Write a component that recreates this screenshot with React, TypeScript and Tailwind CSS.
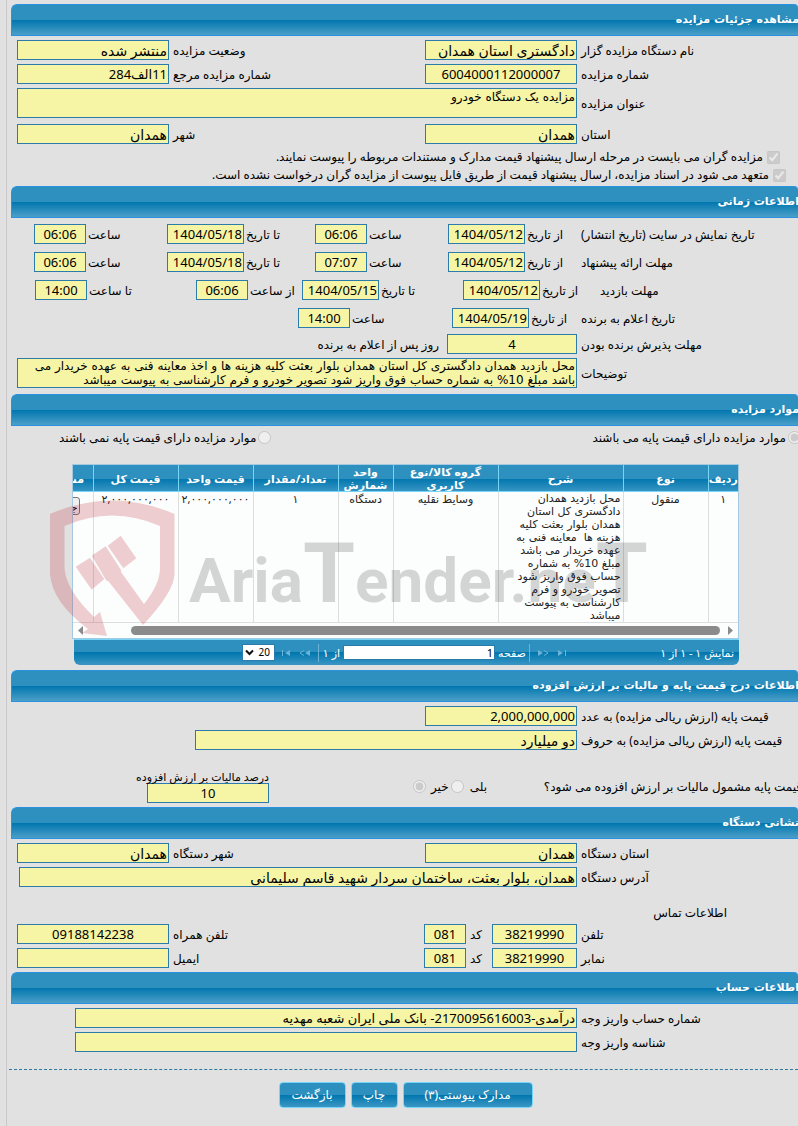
import { useId } from "react";
import type { ReactNode } from "react";

const boxClass =
  "block shrink-0 rounded-none border border-[#2b7bab] bg-[#f6f4a5] p-0 px-px leading-[16px] text-black outline-none";

type FieldProps = {
  label: string;
  value: string;
  slot: string;
  width: string;
  align?: string;
  ltr?: boolean;
};

function Field({ label, value, slot, width, align = "text-right", ltr = false }: FieldProps) {
  const id = useId();
  const size = /\d/.test(value) ? "text-[13px]" : "text-sm";
  return (
    <>
      <label htmlFor={id} className={`${slot} whitespace-nowrap pt-[2px] text-left`}>
        {label}
      </label>
      <input
        id={id}
        readOnly
        dir={ltr ? "ltr" : "rtl"}
        defaultValue={value}
        className={`${boxClass} h-5 ${size} ${width} ${align}`}
      />
    </>
  );
}

function Area({ label, value, leading }: { label: string; value: string; leading: string }) {
  const id = useId();
  return (
    <Row>
      <label htmlFor={id} className="w-[217px] shrink-0 pt-[2px] text-left">
        {label}
      </label>
      <textarea
        id={id}
        readOnly
        defaultValue={value}
        className={`block h-[30px] min-w-0 flex-1 resize-none overflow-hidden rounded-none border border-[#2b7bab] bg-[#f6f4a5] p-0 px-px font-['DejaVu_Sans',sans-serif] text-xs text-black outline-none ${leading}`}
      />
    </Row>
  );
}

function Row({ children, className = "pl-[17px]" }: { children: ReactNode; className?: string }) {
  return <div className={`flex items-center gap-1 ${className}`}>{children}</div>;
}

function TimeRow({ children }: { children: ReactNode }) {
  return <div className="flex items-center gap-[2px]">{children}</div>;
}

function SectionTitle({ children }: { children: ReactNode }) {
  return (
    <h2 className="ml-[11px] flex h-8 items-center overflow-hidden rounded-tl-md rounded-tr-sm border border-r-0 border-[#2a92e0] bg-[linear-gradient(#2e90be_0%,#2e90be_50%,#0076ae_50%,#4b9fc8_100%)] font-['DejaVu_Sans',sans-serif] text-[11px] font-bold text-white">
      <span className="-mr-px whitespace-nowrap">{children}</span>
    </h2>
  );
}

const columns = [
  { title: "ردیف", width: "w-[30px]" },
  { title: "نوع", width: "w-[85px]" },
  { title: "شرح", width: "w-[125px]" },
  { title: "گروه کالا/نوع کاربری", width: "w-[105px]" },
  { title: "واحد شمارش", width: "w-[55px]" },
  { title: "تعداد/مقدار", width: "w-[85px]" },
  { title: "قیمت واحد", width: "w-[75px]" },
  { title: "قیمت کل", width: "w-[85px]" },
  { title: "مشخصات", width: "w-[70px]" },
];

const descriptionLines = [
  "محل بازدید همدان",
  "دادگستری کل استان",
  "همدان بلوار بعثت کلیه",
  "هزینه ها  معاینه فنی به",
  "عهده خریدار می باشد",
  "مبلغ 10% به شماره",
  "حساب فوق واریز شود",
  "تصویر خودرو و فرم",
  "کارشناسی به پیوست",
  "میباشد",
];

function Watermark() {
  return (
    <svg
      className="pointer-events-none absolute -left-[22px] top-9 h-[140px] w-[604px]"
      viewBox="50 500 604 140"
      aria-hidden="true"
      direction="ltr"
    >
      <g fill="#be1e2d" fillOpacity="0.21">
        <path d="M50 514 Q112 487 174.500 514 V574 Q174 592 143 625 L109 582 L121 572 L144 604 Q160 584 160 568 V526 Q112 505 64.500 526 V568 Q66 590 94 617 L100 612 L107 636 L82 633 L88 629 Q52 602 50 574 Z" />
        <path d="M120.700 535.700 L136.300 558.300 L123.300 568.300 L107.700 545.700 Z" />
        <path d="M105.700 546.300 L121 570 L121 572 L109 582 L106 580 L91.700 555.700 Z" />
        <path d="M90 557.700 L104.300 579 L91.700 589.700 L75.700 566.700 Z" />
      </g>
      <text
        x="189"
        y="602"
        fill="#000000"
        fillOpacity="0.16"
        fontWeight="700"
        fontFamily="Roboto, sans-serif"
        fontSize="62"
      >
        <tspan fontSize="62">Aria</tspan>
        <tspan fontSize="84">T</tspan>
        <tspan fontSize="62">ender.ne</tspan>
        <tspan fontSize="84">T</tspan>
      </text>
    </svg>
  );
}

function PageArrow({ dir, kind, label }: { dir: "left" | "right"; kind: "end" | "step"; label: string }) {
  return (
    <button type="button" disabled aria-label={label} className="block">
      <svg width="12" height="8" viewBox="0 0 12 8" className={dir === "right" ? "" : "rotate-180"}>
        <path d="M1 1 V7 L6 4 Z" fill="#6cb3d6" />
        {kind === "end" ? (
          <path d="M8.500 1 V7" stroke="#6cb3d6" strokeWidth="1" />
        ) : (
          <path d="M7 1.500 L11 4 L7 6.500" stroke="#6cb3d6" fill="none" />
        )}
      </svg>
    </button>
  );
}

function ItemsTable() {
  const cell = "border-l border-[#dddddd] px-[2px] align-top";
  return (
    <div className="relative ml-[72px] mr-[59px] mt-[18px] text-[11px]">
      <div className="overflow-hidden border border-[#a6c9e2] bg-[#fcfdfd]">
        <table className="w-[715px] table-fixed border-collapse leading-[13px] text-[#222222]">
          <thead>
            <tr className="h-[26px] bg-[linear-gradient(#2e90be_0%,#2e90be_50%,#0076ae_50%,#3b97c4_100%)] text-white">
              {columns.map((c) => (
                <th
                  key={c.title}
                  className={`${c.width} overflow-hidden border-b border-l border-[#77d5f7] p-0 text-center font-bold`}
                >
                  {c.title}
                </th>
              ))}
            </tr>
          </thead>
          <tbody>
            <tr className="border-b border-[#dddddd] text-center">
              <td className={cell}>۱</td>
              <td className={cell}>منقول</td>
              <td className={`${cell} whitespace-pre text-right font-['DejaVu_Sans',sans-serif]`}>
                {descriptionLines.map((line) => (
                  <div key={line}>{line}</div>
                ))}
              </td>
              <td className={cell}>وسایط نقلیه</td>
              <td className={cell}>دستگاه</td>
              <td className={cell}>۱</td>
              <td className={`${cell} whitespace-nowrap`}>۲,۰۰۰,۰۰۰,۰۰۰</td>
              <td className={`${cell} whitespace-nowrap`}>۲,۰۰۰,۰۰۰,۰۰۰</td>
              <td className="pr-[13px] pt-[5px] text-right align-top">
                <button
                  type="button"
                  className="h-[18px] rounded-[3px] border border-[#767676] bg-[#efefef] px-px text-black"
                >
                  جزئیات
                </button>
              </td>
            </tr>
          </tbody>
        </table>
        <div className="flex h-[15px] items-center justify-between px-[5px]">
          <svg width="5" height="9" viewBox="0 0 5 9">
            <path d="M0 0 V9 L5 4.500 Z" fill="#8b8b8b" />
          </svg>
          <div className="mr-2 ml-12 h-[9px] flex-1 rounded-full bg-[#8b8b8b]" />
          <svg width="5" height="9" viewBox="0 0 5 9">
            <path d="M5 0 V9 L0 4.500 Z" fill="#8b8b8b" />
          </svg>
        </div>
      </div>
      <div className="ml-[2px] flex h-[26px] items-center rounded-b-md border-t border-[#77d5f7] bg-[linear-gradient(#2e90be_0%,#2e90be_50%,#0076ae_50%,#3b97c4_100%)] pr-[5px] text-white">
        <span className="w-[165px] shrink-0 whitespace-nowrap">نمایش ۱ - ۱ از ۱</span>
        <div className="flex items-center gap-2">
          <PageArrow dir="right" kind="end" label="صفحه اول" />
          <PageArrow dir="right" kind="step" label="صفحه قبل" />
        </div>
        <span className="mr-[7px] h-[18px] w-px bg-[#6cb3d6]" />
        <label htmlFor="page-no" className="w-[34px] text-center">
          صفحه
        </label>
        <input
          id="page-no"
          dir="ltr"
          defaultValue="1"
          className="h-[15px] w-[152px] rounded-none border border-[#2b7bab] bg-white px-px text-right text-[11px] text-black outline-none"
        />
        <span className="w-6 whitespace-nowrap pr-[3px]">از ۱</span>
        <span className="h-[18px] w-px bg-[#6cb3d6]" />
        <div className="mr-[7px] flex items-center gap-2">
          <PageArrow dir="left" kind="step" label="صفحه بعد" />
          <PageArrow dir="left" kind="end" label="صفحه آخر" />
        </div>
        <div className="relative mr-1">
          <select
            aria-label="تعداد ردیف"
            defaultValue="20"
            className="block h-[17px] w-[33px] appearance-none rounded-none border border-[#2b7bab] bg-white pr-1 text-[10px] leading-[13px] text-black outline-none"
          >
            <option>20</option>
            <option>50</option>
          </select>
          <svg className="pointer-events-none absolute left-[3px] top-[5px]" width="9" height="7" viewBox="0 0 9 7">
            <path d="M1 1.500 L4.500 5 L8 1.500" fill="none" stroke="#111" strokeWidth="2" />
          </svg>
        </div>
      </div>
      <Watermark />
    </div>
  );
}

function Choice({ name, label, checked = false }: { name: string; label: string; checked?: boolean }) {
  return (
    <label className="flex items-center gap-[2px] whitespace-nowrap">
      <input type="radio" name={name} disabled defaultChecked={checked} className="m-0 size-[13px] shrink-0" />
      {label}
    </label>
  );
}

function Pledge({ label, indent }: { label: string; indent: string }) {
  return (
    <label className={`flex h-[18px] items-center gap-1 whitespace-nowrap ${indent}`}>
      <input type="checkbox" disabled defaultChecked className="m-0 size-[13px] shrink-0" />
      {label}
    </label>
  );
}

const actionClass =
  "h-[26px] whitespace-nowrap rounded-[4px] border border-[#77d5f7] bg-[linear-gradient(#2e90be_0%,#2e90be_50%,#0076ae_50%,#3b97c4_100%)] text-center text-xs text-white";

export default function App() {
  return (
    <div className="min-h-screen overflow-hidden bg-[#e1e1e1]">
      <main
        dir="rtl"
        className="min-h-screen bg-[linear-gradient(#c8c8c8,#c8c8c8)] bg-[length:1px_100%] bg-[position:6px_0] bg-no-repeat pb-4 pt-1 font-['Noto_Sans','DejaVu_Sans',sans-serif] text-xs leading-[14px] text-black"
      >
        <SectionTitle>مشاهده جزئیات مزایده</SectionTitle>
        <section className="flex flex-col gap-1 pb-[2px] pt-1">
          <Row>
            <Field label="نام دستگاه مزایده گزار" value="دادگستری استان همدان" slot="w-[217px] shrink-0" width="w-[152px]" />
            <Field label="وضعیت مزایده" value="منتشر شده" slot="flex-1" width="w-[152px]" />
          </Row>
          <Row>
            <Field label="شماره مزایده" value="6004000112000007" slot="w-[217px] shrink-0" width="w-[152px]" align="text-center" />
            <Field label="شماره مزایده مرجع" value="11الف284" slot="flex-1" width="w-[152px]" />
          </Row>
          <Area label="عنوان مزایده" value="مزایده یک دستگاه خودرو" leading="leading-[16px]" />
          <div className="pt-[2px]">
            <Row>
              <Field label="استان" value="همدان" slot="w-[217px] shrink-0" width="w-[152px]" />
              <Field label="شهر" value="همدان" slot="flex-1" width="w-[152px]" />
            </Row>
          </div>
          <div>
            <Pledge
              indent="pr-[18px]"
              label="مزایده گران می بایست در مرحله ارسال پیشنهاد قیمت مدارک و مستندات مربوطه را پیوست نمایند."
            />
            <Pledge
              indent="pr-3"
              label="متعهد می شود در اسناد مزایده، ارسال پیشنهاد قیمت از طریق فایل پیوست از مزایده گران درخواست نشده است."
            />
          </div>
        </section>

        <SectionTitle>اطلاعات زمانی</SectionTitle>
        <section className="pb-[6px] pt-[6px]">
          <div className="flex flex-col gap-2">
            <TimeRow>
              <span className="w-[217px] shrink-0 whitespace-nowrap pt-[2px] text-left">
                تاریخ نمایش در سایت (تاریخ انتشار)
              </span>
              <Field label="از تاریخ" value="1404/05/12" slot="w-[52px]" width="w-[77px]" ltr />
              <Field label="ساعت" value="06:06" slot="w-[77px]" width="w-[52px]" align="text-center" ltr />
              <Field label="تا تاریخ" value="1404/05/18" slot="w-[67px]" width="w-[77px]" ltr />
              <Field label="ساعت" value="06:06" slot="w-[77px]" width="w-[52px]" align="text-center" ltr />
            </TimeRow>
            <TimeRow>
              <span className="w-[217px] shrink-0 whitespace-nowrap pt-[2px] text-left">مهلت ارائه پیشنهاد</span>
              <Field label="از تاریخ" value="1404/05/12" slot="w-[52px]" width="w-[77px]" ltr />
              <Field label="ساعت" value="07:07" slot="w-[77px]" width="w-[52px]" align="text-center" ltr />
              <Field label="تا تاریخ" value="1404/05/18" slot="w-[67px]" width="w-[77px]" ltr />
              <Field label="ساعت" value="06:06" slot="w-[77px]" width="w-[52px]" align="text-center" ltr />
            </TimeRow>
            <TimeRow>
              <span className="w-[198px] shrink-0 whitespace-nowrap pt-[2px] text-left">مهلت بازدید</span>
              <Field label="از تاریخ" value="1404/05/12" slot="w-[56px]" width="w-[77px]" ltr />
              <Field label="تا تاریخ" value="1404/05/15" slot="w-[80px]" width="w-[77px]" ltr />
              <Field label="از ساعت" value="06:06" slot="w-[50px]" width="w-[52px]" align="text-center" ltr />
              <Field label="تا ساعت" value="14:00" slot="w-[105px]" width="w-[52px]" align="text-center" ltr />
            </TimeRow>
            <TimeRow>
              <span className="w-[217px] shrink-0 whitespace-nowrap pt-[2px] text-left">تاریخ اعلام به برنده</span>
              <Field label="از تاریخ" value="1404/05/19" slot="w-[48px]" width="w-[77px]" ltr />
              <Field label="ساعت" value="14:00" slot="w-[98px]" width="w-[52px]" align="text-center" ltr />
            </TimeRow>
          </div>
          <div className="flex flex-col gap-1 pt-[6px]">
            <Row>
              <Field label="مهلت پذیرش برنده بودن" value="4" slot="w-[217px] shrink-0" width="w-[130px]" align="text-center" />
              <span className="pr-1 pt-[2px]">روز پس از اعلام به برنده</span>
            </Row>
            <Area
              label="توضیحات"
              value="محل بازدید همدان دادگستری کل استان همدان بلوار بعثت کلیه هزینه ها و اخذ معاینه فنی به عهده خریدار می باشد مبلغ 10% به شماره حساب فوق واریز شود تصویر خودرو و فرم کارشناسی به پیوست میباشد"
              leading="leading-[14px]"
            />
          </div>
        </section>

        <SectionTitle>موارد مزایده</SectionTitle>
        <section className="pb-[5px] pt-[3px]">
          <div className="-mr-[3px] flex h-[17px] items-center gap-[321px]">
            <Choice name="base-price" label="موارد مزایده دارای قیمت پایه می باشند" checked />
            <Choice name="base-price" label="موارد مزایده دارای قیمت پایه نمی باشند" />
          </div>
          <ItemsTable />
        </section>

        <SectionTitle>اطلاعات درج قیمت پایه و مالیات بر ارزش افزوده</SectionTitle>
        <section className="pb-1 pt-1">
          <div className="flex flex-col gap-1">
            <Row>
              <Field label="قیمت پایه (ارزش ریالی مزایده) به عدد" value="2,000,000,000" slot="w-[217px] shrink-0" width="w-[152px]" ltr />
            </Row>
            <Row>
              <Field label="قیمت پایه (ارزش ریالی مزایده) به حروف" value="دو میلیارد" slot="w-[217px] shrink-0" width="w-[382px]" />
            </Row>
          </div>
          <div className="flex items-center pt-5">
            <span className="-mr-1 w-[256px] shrink-0 whitespace-nowrap text-left">
              قیمت پایه مشمول مالیات بر ارزش افزوده می شود؟
            </span>
            <div className="mr-[59px] flex items-center">
              <label className="flex items-center gap-[6px]">
                بلی
                <input type="radio" name="vat" disabled className="m-0 size-[13px]" />
              </label>
              <label className="mr-[2px] flex items-center gap-[5px]">
                خیر
                <input type="radio" name="vat" disabled defaultChecked className="m-0 size-[13px]" />
              </label>
            </div>
            <div className="mr-auto pl-[147px]">
              <label htmlFor="vat-rate" className="block h-[13px] w-[122px] whitespace-nowrap text-[11px]">
                درصد مالیات بر ارزش افزوده
              </label>
              <input id="vat-rate" readOnly defaultValue="10" className={`${boxClass} h-5 w-[122px] text-center text-[13px]`} />
            </div>
          </div>
        </section>

        <SectionTitle>نشانی دستگاه</SectionTitle>
        <section className="flex flex-col gap-1 pb-1 pt-1">
          <Row>
            <Field label="استان دستگاه" value="همدان" slot="w-[217px] shrink-0" width="w-[152px]" />
            <Field label="شهر دستگاه" value="همدان" slot="flex-1" width="w-[152px]" />
          </Row>
          <Row className="pl-[19px]">
            <Field
              label="آدرس دستگاه"
              value="همدان، بلوار بعثت، ساختمان سردار شهید قاسم سلیمانی"
              slot="w-[217px] shrink-0"
              width="min-w-0 flex-1 shrink"
            />
          </Row>
          <h3 className="flex h-[29px] items-end pr-[71px]">اطلاعات تماس</h3>
          <Row>
            <Field label="تلفن" value="38219990" slot="w-[217px] shrink-0" width="w-[85px]" align="text-center" ltr />
            <Field label="کد" value="081" slot="w-[18px]" width="w-[42px]" align="text-center" ltr />
            <Field label="تلفن همراه" value="09188142238" slot="flex-1" width="w-[152px]" align="text-center" ltr />
          </Row>
          <Row>
            <Field label="نمابر" value="38219990" slot="w-[217px] shrink-0" width="w-[85px]" align="text-center" ltr />
            <Field label="کد" value="081" slot="w-[18px]" width="w-[42px]" align="text-center" ltr />
            <Field label="ایمیل" value="" slot="flex-1" width="w-[152px]" ltr />
          </Row>
        </section>

        <SectionTitle>اطلاعات حساب</SectionTitle>
        <section className="flex flex-col gap-1 pt-1">
          <Row className="pl-[75px]">
            <Field
              label="شماره حساب واریز وجه"
              value="درآمدی-2170095616003- بانک ملی ایران شعبه مهدیه"
              slot="w-[217px] shrink-0"
              width="min-w-0 flex-1 shrink"
            />
          </Row>
          <Row className="pl-[75px]">
            <Field label="شناسه واریز وجه" value="" slot="w-[217px] shrink-0" width="min-w-0 flex-1 shrink" />
          </Row>
        </section>

        <footer className="ml-[9px] mt-[17px] border-t border-dashed border-[#2b7b9f] pl-1 pt-3">
          <div className="flex justify-center gap-[5px]">
            <button type="button" className={`${actionClass} w-[130px]`}>
              مدارک پیوستی(۳)
            </button>
            <button type="button" className={`${actionClass} w-[47px]`}>
              چاپ
            </button>
            <button type="button" className={`${actionClass} w-[67px]`}>
              بازگشت
            </button>
          </div>
        </footer>
      </main>
    </div>
  );
}
